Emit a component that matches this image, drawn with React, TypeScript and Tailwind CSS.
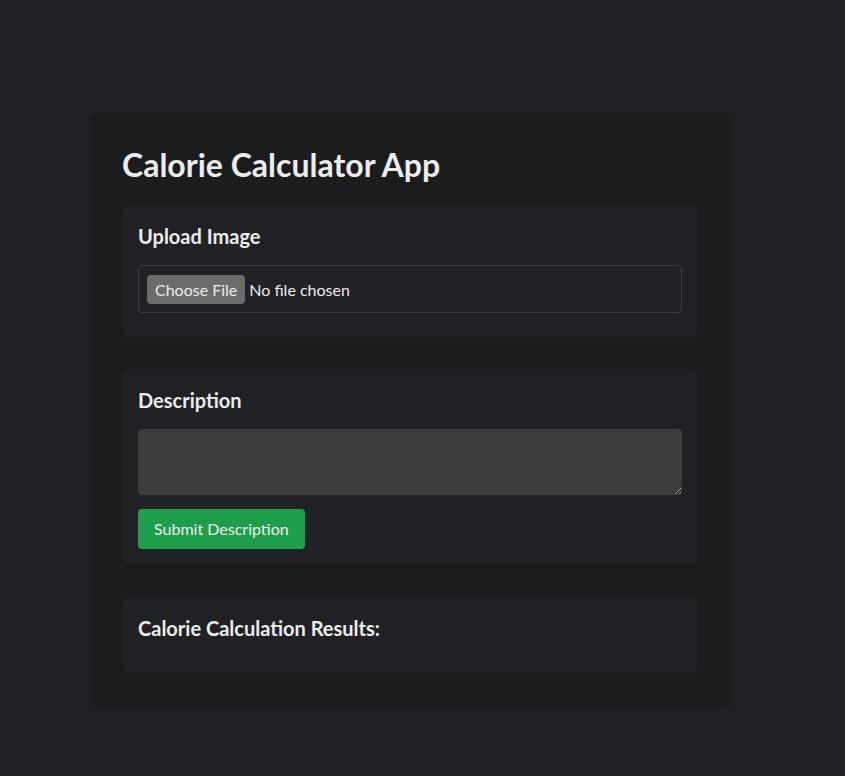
import React, { useState } from 'react';

const font = { fontFamily: 'Lato, "Noto Sans", sans-serif' };

const App: React.FC = () => {
  const [description, setDescription] = useState('');

  return (
    <div className="min-h-screen w-full bg-[#202124] pt-[113px] pl-[90px] pb-[71px]" style={font}>
      {/* main card */}
      <div className="w-[640px] rounded-lg bg-[#1b1c1e] px-8 pt-[32px] pb-8 shadow-md">
        <h2 className="text-[32px] font-bold leading-[40px] text-[#ececec] mb-[20px]">Calorie Calculator App</h2>

        {/* upload */}
        <section className="rounded-lg bg-[#202124] px-4 pt-[19px] pb-6 shadow-sm mb-8">
          <h5 className="text-[20px] font-bold leading-6 text-[#ececec] mb-[17px]">Upload Image</h5>
          <input
            type="file"
            className="block w-full rounded border border-[#3c3d40] bg-[#202124] px-2 pt-[9px] pb-[8px] text-[16px] leading-[29px] text-[#ececec] file:mr-1 file:h-[29px] file:rounded-sm file:border-0 file:bg-[#6b6b6b] file:px-2 file:text-[16px] file:text-[#ececec]"
          />
        </section>

        {/* description */}
        <section className="rounded-lg bg-[#202124] px-4 pt-[19px] pb-4 shadow-sm mb-8">
          <h5 className="text-[20px] font-bold leading-6 text-[#ececec] mb-[17px]">Description</h5>
          <textarea
            value={description}
            onChange={(e) => setDescription(e.target.value)}
            className="block h-[66px] w-full rounded bg-[#3c3c3c] px-3 py-2 text-[16px] text-[#ececec] outline-none"
          />
          <button className="mt-[14px] h-10 rounded bg-[#1e9e4b] px-4 text-[16px] text-[#f0f0f0]">
            Submit Description
          </button>
        </section>

        {/* results */}
        <section className="rounded-lg bg-[#202124] px-4 pt-[19px] pb-[33px] shadow-sm">
          <h5 className="text-[20px] font-bold leading-6 text-[#ececec]">Calorie Calculation Results:</h5>
        </section>
      </div>
    </div>
  );
};

export default App;
